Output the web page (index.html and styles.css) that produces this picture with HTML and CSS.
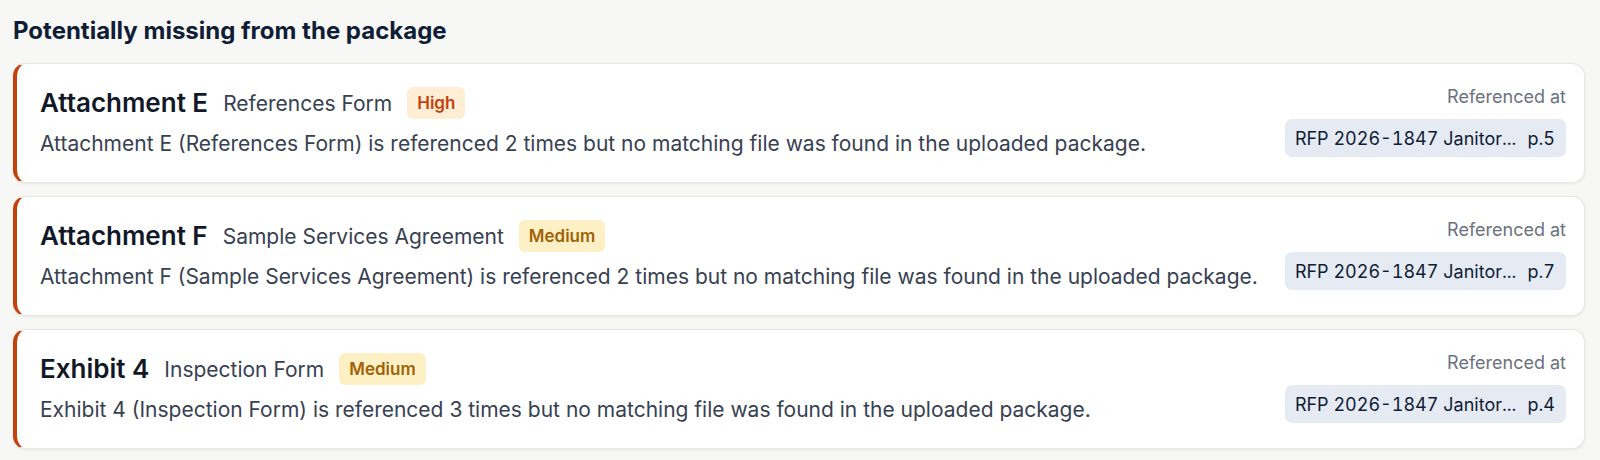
FILE: index.html
```html
<!DOCTYPE html>
<html lang="en">
<head>
  <meta charset="UTF-8" />
  <title>Missing documents</title>
  <link rel="stylesheet" href="styles.css">
</head>
<body>
  <div class="section">
    <h3 class="section-title">Potentially missing from the package</h3>

    <div class="card">
      <div class="card-main">
        <div class="card-head">
          <span class="doc-name">Attachment E</span>
          <span class="doc-title">References Form</span>
          <span class="badge badge-high">High</span>
        </div>
        <div class="card-desc">Attachment E (References Form) is referenced 2 times but no matching file was found in the uploaded package.</div>
      </div>
      <div class="card-refs">
        <div class="refs-label">Referenced at</div>
        <div class="ref-chip"><span>RFP 2026-1847 Janitor...</span><span>p.5</span></div>
      </div>
    </div>

    <div class="card">
      <div class="card-main">
        <div class="card-head">
          <span class="doc-name">Attachment F</span>
          <span class="doc-title">Sample Services Agreement</span>
          <span class="badge badge-medium">Medium</span>
        </div>
        <div class="card-desc">Attachment F (Sample Services Agreement) is referenced 2 times but no matching file was found in the uploaded package.</div>
      </div>
      <div class="card-refs">
        <div class="refs-label">Referenced at</div>
        <div class="ref-chip"><span>RFP 2026-1847 Janitor...</span><span>p.7</span></div>
      </div>
    </div>

    <div class="card">
      <div class="card-main">
        <div class="card-head">
          <span class="doc-name">Exhibit 4</span>
          <span class="doc-title">Inspection Form</span>
          <span class="badge badge-medium">Medium</span>
        </div>
        <div class="card-desc">Exhibit 4 (Inspection Form) is referenced 3 times but no matching file was found in the uploaded package.</div>
      </div>
      <div class="card-refs">
        <div class="refs-label">Referenced at</div>
        <div class="ref-chip"><span>RFP 2026-1847 Janitor...</span><span>p.4</span></div>
      </div>
    </div>
  </div>
</body>
</html>
```

FILE: styles.css
```css
body {
  margin: 0;
  padding: 0;
  background: #f7f7f5;
  font-family: Inter, 'Noto Sans', sans-serif;
  color: #1f2937;
}

.section {
  padding: 15px 15px 0 13px;
}

.section-title {
  margin: 0 0 16px;
  font-size: 24px;
  line-height: 32px;
  font-weight: 700;
  color: #0f1d36;
}

.card {
  display: flex;
  justify-content: space-between;
  align-items: center;
  background: #fff;
  border: 1px solid #e6e6e3;
  border-left: 4px solid #c2410c;
  border-radius: 13px;
  box-shadow: 0 1px 3px rgba(0, 0, 0, 0.07);
  padding: 23px 18px 23px 23px;
  margin-bottom: 13px;
}

.card-head {
  display: flex;
  align-items: center;
  gap: 15px;
}

.doc-name {
  font-size: 26px;
  line-height: 32px;
  font-weight: 600;
  color: #111827;
}

.doc-title {
  font-size: 21px;
  color: #374151;
}

.badge {
  font-size: 17px;
  line-height: 22px;
  font-weight: 600;
  padding: 5px 10px;
  border-radius: 6px;
}

.badge-high {
  background: #ffedd5;
  color: #c2410c;
}

.badge-medium {
  background: #fdf0c4;
  color: #a16207;
}

.card-desc {
  margin-top: 10px;
  font-size: 21px;
  line-height: 30px;
  color: #374151;
}

.card-refs {
  display: flex;
  flex-direction: column;
  align-items: flex-end;
  flex-shrink: 0;
  margin-top: -4px;
}

.refs-label {
  font-size: 18px;
  line-height: 24px;
  color: #6b7280;
}

.ref-chip {
  display: flex;
  gap: 11px;
  margin-top: 10px;
  padding: 7px 11px 6px 10px;
  background: #e5eaf3;
  border-radius: 7px;
  font-size: 18px;
  line-height: 25px;
  font-variant-numeric: tabular-nums;
  color: #0f1d36;
}
```
